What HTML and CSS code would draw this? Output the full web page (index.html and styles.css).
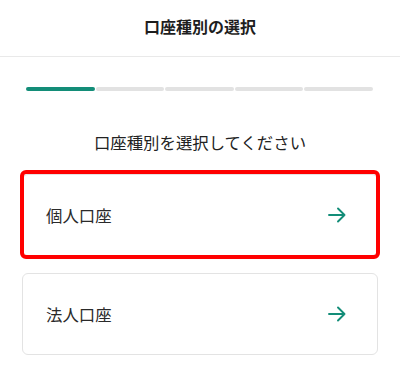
FILE: index.html
```html
<!DOCTYPE html>
<html lang="ja">
<head>
<meta charset="utf-8">
<link rel="stylesheet" href="styles.css">
</head>
<body>
<div class="page">
  <header class="header"><h1 class="title">口座種別の選択</h1></header>
  <div class="progress">
    <span class="seg active"></span>
    <span class="seg"></span>
    <span class="seg"></span>
    <span class="seg"></span>
    <span class="seg"></span>
  </div>
  <p class="lead">口座種別を選択してください</p>
  <div class="options">
    <div class="card highlighted">
      <span class="label">個人口座</span>
      <svg class="arrow" viewBox="0 0 18 16" width="18" height="16"><path d="M1 8H16.5M10 1.5L16.5 8L10 14.5" fill="none" stroke="currentColor" stroke-width="1.9" stroke-linecap="round" stroke-linejoin="round"/></svg>
    </div>
    <div class="card">
      <span class="label">法人口座</span>
      <svg class="arrow" viewBox="0 0 18 16" width="18" height="16"><path d="M1 8H16.5M10 1.5L16.5 8L10 14.5" fill="none" stroke="currentColor" stroke-width="1.9" stroke-linecap="round" stroke-linejoin="round"/></svg>
    </div>
  </div>
</div>
</body>
</html>
```
FILE: styles.css
```css
* { box-sizing: border-box; }
html, body { margin: 0; padding: 0; background: #fff; }
body {
  font-family: "Noto Sans CJK JP", "Noto Sans", sans-serif;
  color: #222;
  width: 400px;
  height: 376px;
  overflow: hidden;
}
.header {
  height: 57px;
  border-bottom: 1px solid #e9e9e9;
  display: flex;
  align-items: center;
  justify-content: center;
  padding-bottom: 4px;
}
.title {
  margin: 0;
  font-size: 16px;
  font-weight: 700;
  color: #1e1e1e;
}
.progress {
  display: grid;
  grid-template-columns: repeat(5, 1fr);
  gap: 1px;
  margin: 30px 27px 0 26px;
  height: 4px;
}
.seg {
  background: #e2e2e2;
  border-radius: 2px;
}
.seg.active { background: #138d78; }
.lead {
  margin: 37px 0 0;
  text-align: center;
  font-size: 16.4px;
  line-height: 28px;
  color: #222;
}
.options {
  margin: 18px 22px 0;
  display: flex;
  flex-direction: column;
  gap: 17px;
}
.card {
  position: relative;
  height: 82px;
  border: 1px solid #e3e3e3;
  border-radius: 6px;
  display: flex;
  align-items: center;
  justify-content: space-between;
  padding: 0 31px 0 23px;
}
.card.highlighted::after {
  content: "";
  position: absolute;
  top: -5px;
  left: -3px;
  right: -3px;
  bottom: -4px;
  border: 4.5px solid #ff0000;
  border-radius: 6px;
}
.label {
  font-size: 16.4px;
  color: #2a2a2a;
}
.arrow {
  color: #138d78;
  display: block;
}
```
